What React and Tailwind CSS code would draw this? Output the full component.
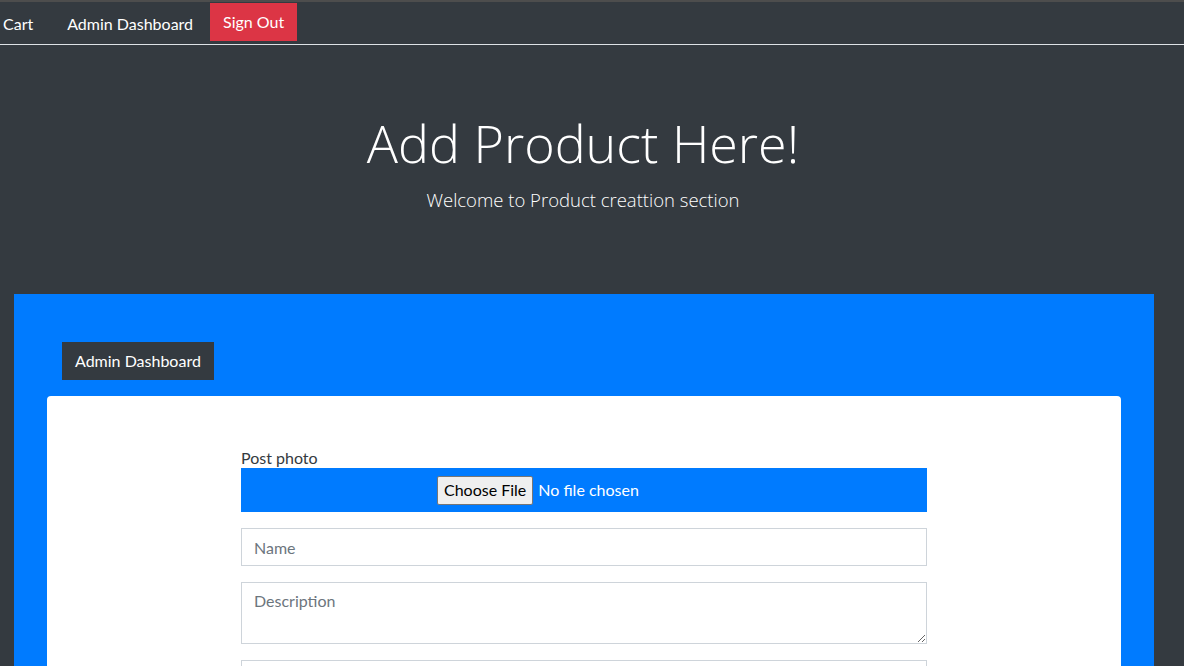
export default function App() {
  return (
    <div className="min-h-[666px] bg-[#343a40] font-['Lato','Open_Sans',sans-serif] text-white overflow-hidden">
      {/* top edge */}
      <div className="h-[2px] bg-[#4d4d4d]" />

      {/* Navbar */}
      <nav className="flex items-start pt-[1px] h-[43px] border-b border-[#dee2e6] text-[16px]">
        <a className="ml-[3px] mt-[9px] text-white">Cart</a>
        <a className="ml-[34px] mt-[9px] text-white">Admin Dashboard</a>
        <button className="ml-[17px] h-[38px] px-[13px] bg-[#dc3545] text-white">Sign Out</button>
      </nav>

      {/* Hero */}
      <div className="h-[249px] flex flex-col items-center pt-[66px] pr-[18px]">
        <h1 className="font-['Open_Sans',sans-serif] font-light text-[52px] leading-[64px]">Add Product Here!</h1>
        <p className="font-['Open_Sans',sans-serif] font-light text-[18.5px] leading-[30px] mt-[10px]">
          Welcome to Product creattion section
        </p>
      </div>

      {/* Blue section */}
      <div className="ml-[14px] w-[1140px] bg-[#007bff] pt-[48px] min-h-[372px]">
        <button className="ml-[48px] h-[38px] px-[13px] bg-[#343a40] text-white text-[16px]">Admin Dashboard</button>
        <div className="mt-[16px] mx-[33px] bg-white rounded-t-[4px] pt-[52px] min-h-[300px]">
          <form className="ml-[194px] w-[686px] text-[16px]">
            <label className="block leading-[18px] mt-[1px] mb-[1px] text-[#343a40]">Post photo</label>
            <div className="h-[44px] bg-[#007bff] flex items-center pl-[196px]">
              <span className="h-[29px] px-[6px] flex items-center bg-[#efefef] border border-[#767676] rounded-[2px] text-black">
                Choose File
              </span>
              <span className="ml-[5px] text-white">No file chosen</span>
            </div>
            <input
              placeholder="Name"
              className="mt-[16px] block w-full h-[38px] px-[12px] border border-[#ced4da] text-[#495057] placeholder:text-[#6c757d] outline-none"
            />
            <textarea
              placeholder="Description"
              className="mt-[16px] block w-full h-[62px] px-[12px] py-[6px] border border-[#ced4da] text-[#495057] placeholder:text-[#6c757d] outline-none"
            />
            <input
              placeholder="Price"
              className="mt-[16px] block w-full h-[38px] px-[12px] border border-[#ced4da] text-[#495057] placeholder:text-[#6c757d] outline-none"
            />
          </form>
        </div>
      </div>
    </div>
  );
}
